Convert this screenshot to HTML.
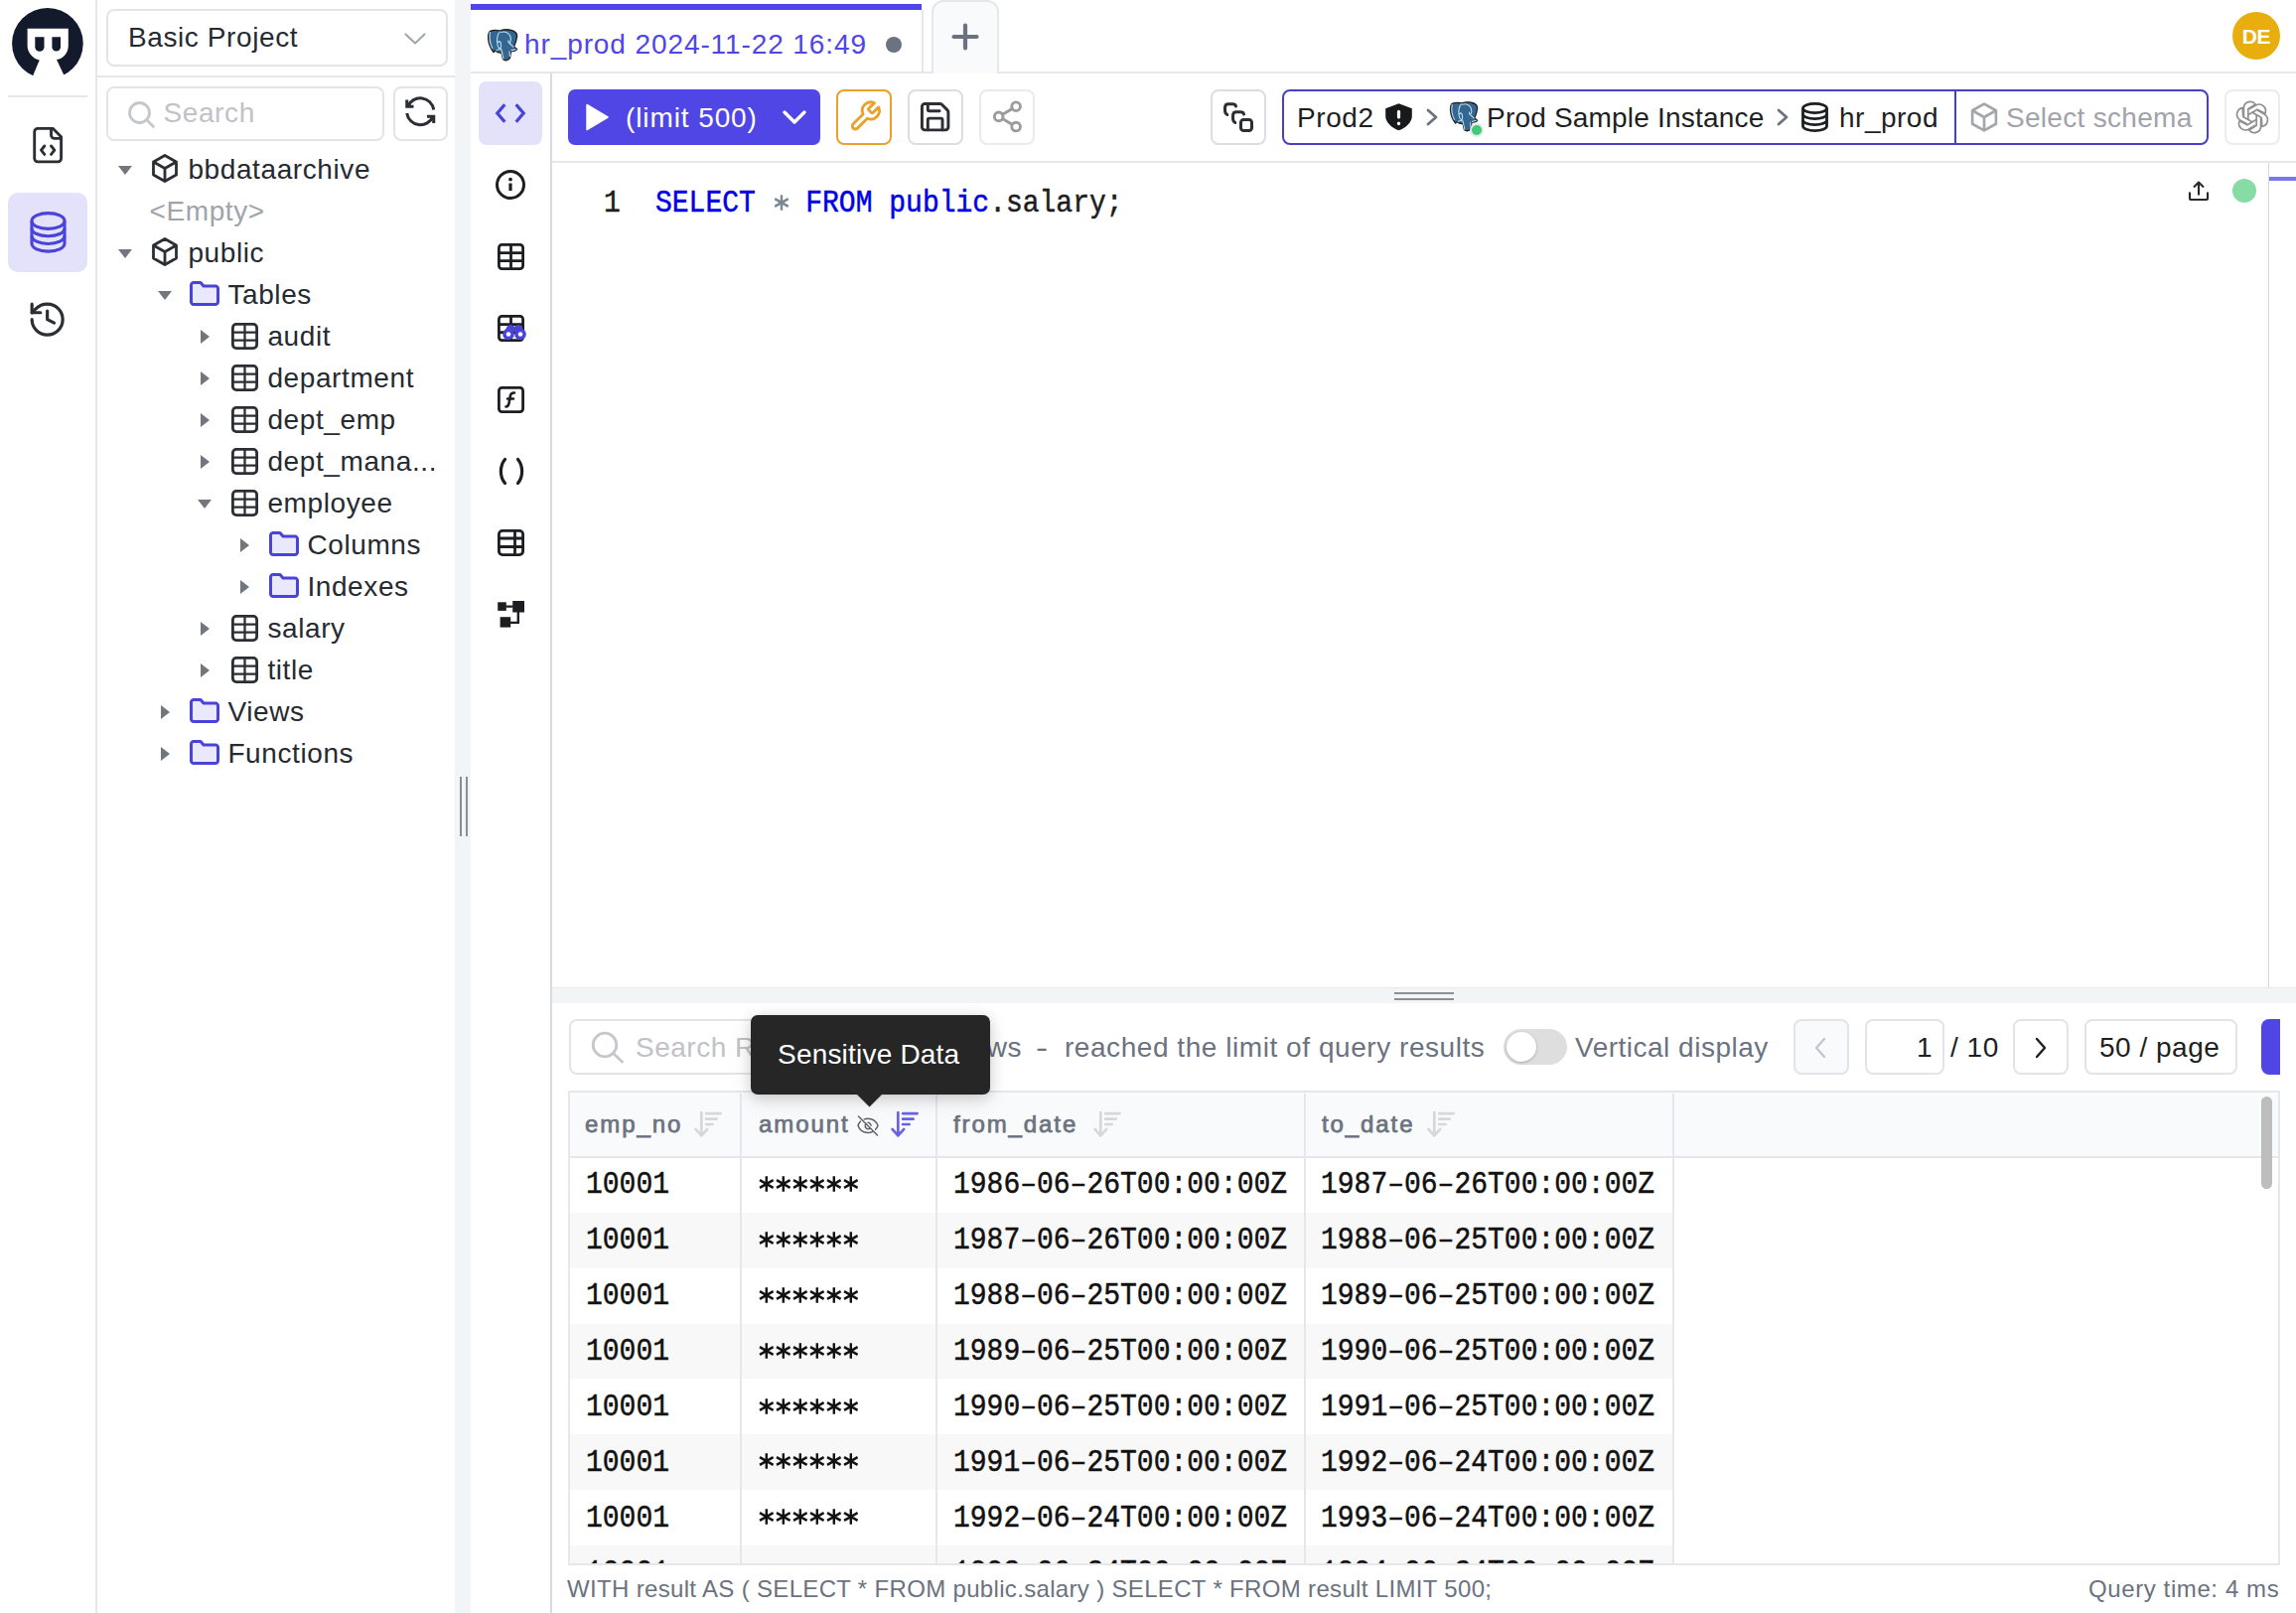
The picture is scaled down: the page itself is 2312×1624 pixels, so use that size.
<!DOCTYPE html>
<html><head><meta charset="utf-8">
<style>
*{box-sizing:border-box;margin:0;padding:0}
html,body{width:2312px;height:1624px;overflow:hidden;background:#fff}
body{position:relative;font-family:"Liberation Sans",sans-serif;color:#262a31}
.a{position:absolute}
.mono{font-family:"Liberation Mono",monospace}
.t.mono{transform:scaleY(1.12);transform-origin:0 23px;letter-spacing:0;-webkit-text-stroke:0.45px currentColor}
svg{position:absolute;overflow:visible}
.t{position:absolute;font-size:28px;line-height:32px;white-space:nowrap;letter-spacing:0.6px}
.row{position:absolute;left:0;width:458px;height:42px}
.hd{position:absolute;top:17px;font-size:24px;line-height:28px;color:#6b7280;-webkit-text-stroke:0.75px #6b7280;letter-spacing:1.9px;white-space:nowrap}
.btn{position:absolute;border:2px solid #e0e0e6;border-radius:8px;background:#fff}
</style></head><body>

<!-- LEFT RAIL -->
<div class="a" style="left:96px;top:0;width:2px;height:1624px;background:#e5e7eb"></div>
<svg style="left:0;top:0" width="100" height="100" viewBox="0 0 100 100">
  <circle cx="47.9" cy="43.8" r="35.8" fill="#131a2b"/>
  <path d="M27.6 28.8H68.8V46C68.8 53 64 59 57 60L67.4 82H30.75L39.7 60.6C33 59 27.6 53 27.6 46Z" fill="#fff"/>
  <path d="M35.3 37.2H44.5V47.2A4.6 4.6 0 0 1 35.3 47.2Z" fill="#131a2b"/>
  <path d="M52.4 37.2H61V47.2A4.3 4.3 0 0 1 52.4 47.2Z" fill="#131a2b"/>
</svg>
<div class="a" style="left:8px;top:96px;width:80px;height:2px;background:#e5e7eb"></div>
<!-- file code icon -->
<svg style="left:27.7px;top:125.8px" width="40.3" height="40.3" viewBox="0 0 24 24" fill="none" stroke="#2b2e33" stroke-width="1.7" stroke-linecap="round" stroke-linejoin="round"><path d="M10 12.5 8 15l2 2.5"/><path d="m14 12.5 2 2.5-2 2.5"/><path d="M14 2v4a2 2 0 0 0 2 2h4"/><path d="M15 2H6a2 2 0 0 0-2 2v16a2 2 0 0 0 2 2h12a2 2 0 0 0 2-2V7z"/></svg>
<div class="a" style="left:8px;top:194px;width:80px;height:80px;background:#e4e2fb;border-radius:10px"></div>
<svg style="left:30px;top:213px" width="37" height="43" viewBox="0 0 37 43" fill="none" stroke="#4a43d9" stroke-width="3.1"><ellipse cx="18.5" cy="9.5" rx="16.5" ry="7.9"/><path d="M2 9.5V32.2A16.5 7.9 0 0 0 35 32.2V9.5"/><path d="M2 16.9A16.5 7.9 0 0 0 35 16.9"/><path d="M2 24.6A16.5 7.9 0 0 0 35 24.6"/></svg>
<svg style="left:27.2px;top:301.2px" width="41.3" height="41.3" viewBox="0 0 24 24" fill="none" stroke="#2b2e33" stroke-width="1.85" stroke-linecap="round" stroke-linejoin="round"><path d="M3 12a9 9 0 1 0 9-9 9.75 9.75 0 0 0-6.74 2.74L3 8"/><path d="M3 3v5h5"/><path d="M12 7v5l4 2"/></svg>

<!-- SIDEBAR -->
<svg width="0" height="0" style="position:absolute">
 <defs>
  <symbol id="arD" viewBox="0 0 14 9"><path d="M0 0H14L7 9Z" fill="#72767d"/></symbol>
  <symbol id="arR" viewBox="0 0 9 14"><path d="M0 0V14L9 7Z" fill="#72767d"/></symbol>
  <symbol id="cube" viewBox="0 0 26 29" overflow="visible"><g fill="none" stroke="#2b2e33" stroke-width="2.8" stroke-linejoin="round"><path d="M13 1.5L24.5 8V21L13 27.5L1.5 21V8Z"/><path d="M1.5 8L13 14.5L24.5 8M13 14.5V27.5"/></g></symbol>
  <symbol id="fold" viewBox="0 0 30 25" overflow="visible"><path d="M1.5 4A2.5 2.5 0 0 1 4 1.5H11L14 5H26A2.5 2.5 0 0 1 28.5 7.5V21A2.5 2.5 0 0 1 26 23.5H4A2.5 2.5 0 0 1 1.5 21Z" fill="#e9e8fc" stroke="#4a43d9" stroke-width="3" stroke-linejoin="round"/></symbol>
  <symbol id="tbl" viewBox="0 0 27 27" overflow="visible"><g fill="none" stroke="#2b2e33" stroke-width="2.8"><rect x="1.4" y="1.4" width="24.2" height="24.2" rx="3.5"/><path d="M13.5 1.4V25.6M1.4 9.6H25.6M1.4 17.6H25.6" stroke-width="2.3"/></g></symbol>
  <symbol id="pgel" viewBox="0 0 32 33" overflow="visible"><path d="M3.5 2.5C8 0.5 11 1.5 13.5 2C17 0.8 21 0.5 24 1.3C29 2.5 31 5 30.5 8C30 12 28.5 16 27.5 18L30.5 20.5C29 22.5 26 22.5 24.5 22.5L23.5 29C22.5 32 18.5 32.5 16.5 30.5L15 24C12 24.5 10 23 9 22L7 23.5C3.5 19 2 14 1.7 10C1.5 6 2 3.5 3.5 2.5Z" fill="#336791" stroke="#222" stroke-width="1.4" stroke-linejoin="round"/><g fill="none" stroke="#bfe0f5" stroke-width="1.1"><path d="M13.5 2.5C10.5 6 10 11 11 16C11.5 19 13 20 14 19.5C15 18 14.5 14 13.5 13C12 12 11.5 13.5 12 14"/><path d="M14 3.5C18.5 2 23 4 24 8C25 11 24 13 23 14.5C25 16 26.5 18 27.5 18.5"/><path d="M14.5 20C15.5 23 16 26 17 30.5M23 22.5L23.5 28"/><path d="M9.5 22C11 20.5 12.5 21 14 20.5M24.5 22C26 21.5 28.5 21 29.5 20.5"/><path d="M3.5 3C2.5 8 3 14 6 20"/><path d="M22 11.5C21.5 12.5 22 14 23 14.5"/></g></symbol>
  <symbol id="tbl2" viewBox="0 0 27 27" overflow="visible"><g fill="none" stroke="#1c1e21" stroke-width="2.8"><rect x="1.4" y="1.4" width="24.2" height="24.2" rx="3"/><path d="M13.5 1.4V25.6M1.4 9.6H25.6M1.4 17.6H25.6"/></g></symbol>
  <symbol id="ast" viewBox="-8 -8 16 16" overflow="visible"><path d="M0 -7.8V7.8M-6.8 -3.9L6.8 3.9M-6.8 3.9L6.8 -3.9" stroke="currentColor" stroke-width="2.4" fill="none"/></symbol>
  <symbol id="ast6" viewBox="0 0 110 18" overflow="visible"><use href="#ast" x="0.8" y="1" width="16" height="16"/><use href="#ast" x="17.8" y="1" width="16" height="16"/><use href="#ast" x="34.8" y="1" width="16" height="16"/><use href="#ast" x="51.8" y="1" width="16" height="16"/><use href="#ast" x="68.8" y="1" width="16" height="16"/><use href="#ast" x="85.8" y="1" width="16" height="16"/></symbol>
  <symbol id="sort" viewBox="0 0 30 30" overflow="visible"><g fill="none" stroke-width="2.7" stroke-linecap="round" stroke-linejoin="round"><path d="M7.3 2.2V25.4M1.5 18.9L7.3 25.4L13.2 18.9M12.1 3.1H26.6M12.1 8.7H22.6M12.1 14H18.6"/></g></symbol>
 </defs>
</svg>
<div class="btn" style="left:107px;top:9px;width:344px;height:58px;border-color:#e3e4e8"></div>
<div class="t" style="left:129px;top:21.5px">Basic Project</div>
<svg style="left:407px;top:33px" width="22" height="12" viewBox="0 0 22 12" fill="none" stroke="#a3a7ae" stroke-width="2.2" stroke-linecap="round" stroke-linejoin="round"><path d="M1.5 1.5L11 10.5L20.5 1.5"/></svg>
<div class="a" style="left:98px;top:76px;width:360px;height:2px;background:#e5e7eb"></div>
<div class="btn" style="left:107px;top:86.5px;width:280px;height:55px;border-color:#e3e4e8"></div>
<svg style="left:129px;top:101.5px" width="27" height="27" viewBox="0 0 27 27" fill="none" stroke="#c4c7cc" stroke-width="2.8" stroke-linecap="round"><circle cx="11.5" cy="11.5" r="10"/><path d="M19 19L25.5 25.5"/></svg>
<div class="t" style="left:164.5px;top:98px;color:#bfc2c7">Search</div>
<div class="btn" style="left:396px;top:86.5px;width:55px;height:55px;border-color:#e3e4e8"></div>
<svg style="left:403.4px;top:92px" width="40.5" height="40.5" viewBox="0 0 24 24" fill="none" stroke="#2b2e33" stroke-width="1.8" stroke-linecap="butt" stroke-linejoin="miter"><path d="M20 11A8.1 8.1 0 0 0 4.5 9M4 5V9H8"/><path d="M4 13A8.1 8.1 0 0 0 19.5 15M20 19V15H16"/></svg>
<div class="row" style="top:150.3px"><svg style="left:119px;top:16.5px" width="14" height="9"><use href="#arD"/></svg><svg style="left:153px;top:5px" width="26" height="29"><use href="#cube"/></svg><div class="t" style="left:189.4px;top:4.3px">bbdataarchive</div></div>
<div class="row" style="top:192.3px"><div class="t" style="left:150.5px;top:4.3px;color:#9fa3aa">&lt;Empty&gt;</div></div>
<div class="row" style="top:234.3px"><svg style="left:119px;top:16.5px" width="14" height="9"><use href="#arD"/></svg><svg style="left:153px;top:5px" width="26" height="29"><use href="#cube"/></svg><div class="t" style="left:189.4px;top:4.3px">public</div></div>
<div class="row" style="top:276.3px"><svg style="left:159px;top:16.5px" width="14" height="9"><use href="#arD"/></svg><svg style="left:191.4px;top:6.5px" width="30" height="25"><use href="#fold"/></svg><div class="t" style="left:229.4px;top:4.3px">Tables</div></div>
<div class="row" style="top:318.3px"><svg style="left:202.3px;top:14px" width="9" height="14"><use href="#arR"/></svg><svg style="left:232.6px;top:6.4px" width="27" height="27"><use href="#tbl"/></svg><div class="t" style="left:269.4px;top:4.3px">audit</div></div>
<div class="row" style="top:360.3px"><svg style="left:202.3px;top:14px" width="9" height="14"><use href="#arR"/></svg><svg style="left:232.6px;top:6.4px" width="27" height="27"><use href="#tbl"/></svg><div class="t" style="left:269.4px;top:4.3px">department</div></div>
<div class="row" style="top:402.3px"><svg style="left:202.3px;top:14px" width="9" height="14"><use href="#arR"/></svg><svg style="left:232.6px;top:6.4px" width="27" height="27"><use href="#tbl"/></svg><div class="t" style="left:269.4px;top:4.3px">dept_emp</div></div>
<div class="row" style="top:444.3px"><svg style="left:202.3px;top:14px" width="9" height="14"><use href="#arR"/></svg><svg style="left:232.6px;top:6.4px" width="27" height="27"><use href="#tbl"/></svg><div class="t" style="left:269.4px;top:4.3px">dept_mana...</div></div>
<div class="row" style="top:486.3px"><svg style="left:199px;top:16.5px" width="14" height="9"><use href="#arD"/></svg><svg style="left:232.6px;top:6.4px" width="27" height="27"><use href="#tbl"/></svg><div class="t" style="left:269.4px;top:4.3px">employee</div></div>
<div class="row" style="top:528.3px"><svg style="left:242.3px;top:14px" width="9" height="14"><use href="#arR"/></svg><svg style="left:271.4px;top:6.5px" width="30" height="25"><use href="#fold"/></svg><div class="t" style="left:309.4px;top:4.3px">Columns</div></div>
<div class="row" style="top:570.3px"><svg style="left:242.3px;top:14px" width="9" height="14"><use href="#arR"/></svg><svg style="left:271.4px;top:6.5px" width="30" height="25"><use href="#fold"/></svg><div class="t" style="left:309.4px;top:4.3px">Indexes</div></div>
<div class="row" style="top:612.3px"><svg style="left:202.3px;top:14px" width="9" height="14"><use href="#arR"/></svg><svg style="left:232.6px;top:6.4px" width="27" height="27"><use href="#tbl"/></svg><div class="t" style="left:269.4px;top:4.3px">salary</div></div>
<div class="row" style="top:654.3px"><svg style="left:202.3px;top:14px" width="9" height="14"><use href="#arR"/></svg><svg style="left:232.6px;top:6.4px" width="27" height="27"><use href="#tbl"/></svg><div class="t" style="left:269.4px;top:4.3px">title</div></div>
<div class="row" style="top:696.3px"><svg style="left:162.3px;top:14px" width="9" height="14"><use href="#arR"/></svg><svg style="left:191.4px;top:6.5px" width="30" height="25"><use href="#fold"/></svg><div class="t" style="left:229.4px;top:4.3px">Views</div></div>
<div class="row" style="top:738.3px"><svg style="left:162.3px;top:14px" width="9" height="14"><use href="#arR"/></svg><svg style="left:191.4px;top:6.5px" width="30" height="25"><use href="#fold"/></svg><div class="t" style="left:229.4px;top:4.3px">Functions</div></div>

<!-- GUTTER -->
<div class="a" style="left:458px;top:0;width:16px;height:1624px;background:#f3f4f6"></div>
<div class="a" style="left:463px;top:782px;width:2px;height:60px;background:#8a8d92"></div>
<div class="a" style="left:469px;top:782px;width:2px;height:60px;background:#8a8d92"></div>

<!-- TAB BAR -->
<div class="a" style="left:474px;top:72px;width:1838px;height:2px;background:#e5e7eb"></div>
<div class="a" style="left:474px;top:4px;width:454px;height:6px;background:#4f46e5"></div>
<div class="a" style="left:928px;top:10px;width:2px;height:62px;background:#e5e7eb"></div>
<svg id="pg1" style="left:490px;top:28.5px" width="32" height="33" viewBox="0 0 32 33"><use href="#pgel"/></svg>
<div class="t" style="left:528px;top:29px;color:#4f46e5;letter-spacing:0.9px">hr_prod 2024-11-22 16:49</div>
<div class="a" style="left:892px;top:37px;width:16px;height:16px;border-radius:50%;background:#6b7280"></div>
<div class="a" style="left:938px;top:0;width:68px;height:74px;border:2px solid #e5e7eb;border-bottom:none;border-radius:12px 12px 0 0;background:#f9fafb"></div>
<svg style="left:956px;top:21px" width="32" height="32" viewBox="0 0 32 32" stroke="#6b7280" stroke-width="4.2" stroke-linecap="round"><path d="M16 4.5V27.5M4.5 16H27.5"/></svg>
<div class="a" style="left:2248px;top:12px;width:48px;height:48px;border-radius:50%;background:#e8ae0d;color:#fff;font-size:21px;font-weight:bold;line-height:50px;text-align:center;letter-spacing:-0.3px">DE</div>

<!-- EDITOR SIDE ICON BAR -->
<div class="a" style="left:554px;top:74px;width:2px;height:1550px;background:#d9dbe0"></div>
<div class="a" style="left:482px;top:82px;width:64px;height:64px;border-radius:8px;background:#e4e2fb"></div>
<svg style="left:499px;top:104px" width="30" height="20" viewBox="0 0 30 20" fill="none" stroke="#4a43d9" stroke-width="3.3"><path d="M9.3 1.2L1.8 10L9.3 18.8M20.7 1.2L28.2 10L20.7 18.8"/></svg>
<svg style="left:499px;top:171px" width="30" height="30" viewBox="0 0 30 30" fill="none" stroke="#1c1e21" stroke-width="3"><circle cx="15" cy="15" r="13.5"/><path d="M15 13.5V21" stroke-width="3.2"/><circle cx="15" cy="9.6" r="1.9" fill="#1c1e21" stroke="none"/></svg>
<svg style="left:500.5px;top:244.5px" width="27" height="27"><use href="#tbl2"/></svg>
<svg style="left:500.5px;top:316.5px" width="27" height="27"><use href="#tbl2"/></svg>
<svg style="left:505px;top:324px" width="26" height="20" viewBox="0 0 26 20"><path d="M4 9C5 4 7 3 9.5 3C11 3 12 4 13 5C14 4 15 3 16.5 3C19 3 21 4 22 9" fill="#4a43d9"/><circle cx="7" cy="12.5" r="5.8" fill="#4a43d9"/><circle cx="19" cy="12.5" r="5.8" fill="#4a43d9"/><circle cx="7" cy="12.5" r="2.3" fill="#fff"/><circle cx="19" cy="12.5" r="2.3" fill="#fff"/></svg>
<svg style="left:500.5px;top:388.5px" width="27" height="27" viewBox="0 0 27 27" fill="none" stroke="#1c1e21" stroke-width="2.8"><rect x="1.4" y="1.4" width="24.2" height="24.2" rx="3"/><path d="M8.5 20.5C10.5 20.5 11 19.5 11.5 17L13 9C13.5 7 14.5 6.3 17 6.5" stroke-width="2.6" stroke-linecap="round"/><path d="M10 12.5H16" stroke-width="2.4" stroke-linecap="round"/></svg>
<svg style="left:501.5px;top:460.5px" width="26" height="27" viewBox="0 0 26 27" fill="none" stroke="#1c1e21" stroke-width="3.2" stroke-linecap="round"><path d="M6.5 1.5C1 8 1 19 6.5 25.5"/><path d="M19.5 1.5C25 8 25 19 19.5 25.5"/></svg>
<svg style="left:500.5px;top:532.5px" width="27" height="27" viewBox="0 0 27 27" fill="none" stroke="#1c1e21" stroke-width="2.8"><rect x="1.4" y="1.4" width="24.2" height="24.2" rx="3.5"/><path d="M17.5 1.4V25.6M1.4 9H25.6M1.4 17.5H25.6"/></svg>
<svg style="left:500px;top:604px" width="30" height="30" viewBox="0 0 30 30"><g fill="#1c1e21"><rect x="1.2" y="2.3" width="8.6" height="8.6"/><rect x="16.2" y="1" width="11.8" height="11.5"/><rect x="3.6" y="17.2" width="10.6" height="10.4"/></g><path d="M9.5 6.6H16.5M21.8 12V22.9H14" fill="none" stroke="#1c1e21" stroke-width="2.4"/></svg>


<!-- TOOLBAR -->
<div class="a" style="left:556px;top:162px;width:1756px;height:2px;background:#e5e7eb"></div>
<div class="a" style="left:572px;top:90px;width:254px;height:56px;border-radius:7px;background:#4f46e5"></div>
<svg style="left:590px;top:104px" width="23" height="28" viewBox="0 0 23 28"><path d="M1 1.5L22 14L1 26.5Z" fill="#fff" stroke="#fff" stroke-width="1.5" stroke-linejoin="round"/></svg>
<div class="t" style="left:630px;top:103px;color:#fff;letter-spacing:0.9px">(limit 500)</div>
<svg style="left:788px;top:111px" width="24" height="15" viewBox="0 0 24 15" fill="none" stroke="#fff" stroke-width="3.4" stroke-linecap="round" stroke-linejoin="round"><path d="M2 2L12 12L22 2"/></svg>
<div class="btn" style="left:842px;top:90px;width:56px;height:56px;border-color:#eaa02a"></div>
<svg style="left:853.6px;top:100.3px" width="34.3" height="34.3" viewBox="0 0 24 24" fill="none" stroke="#eaa02a" stroke-width="2" stroke-linecap="round" stroke-linejoin="round"><path d="M14.7 6.3a1 1 0 0 0 0 1.4l1.6 1.6a1 1 0 0 0 1.4 0l3.77-3.77a6 6 0 0 1-7.94 7.94l-6.91 6.91a2.12 2.12 0 0 1-3-3l6.91-6.91a6 6 0 0 1 7.94-7.94l-3.76 3.76z"/></svg>
<div class="btn" style="left:914px;top:90px;width:56px;height:56px;border-color:#dcdde2"></div>
<svg style="left:924.4px;top:100.1px" width="35.3" height="35.3" viewBox="0 0 24 24" fill="none" stroke="#2b2e33" stroke-width="2" stroke-linecap="round" stroke-linejoin="round"><path d="M15.2 3a2 2 0 0 1 1.4.6l3.8 3.8a2 2 0 0 1 .6 1.4V19a2 2 0 0 1-2 2H5a2 2 0 0 1-2-2V5a2 2 0 0 1 2-2z"/><path d="M17 21v-7a1 1 0 0 0-1-1H8a1 1 0 0 0-1 1v7"/><path d="M7 3v4a1 1 0 0 0 1 1h7"/></svg>
<div class="btn" style="left:986px;top:90px;width:56px;height:56px;border-color:#e9eaed"></div>
<svg style="left:996.9px;top:100.3px" width="34.8" height="34.8" viewBox="0 0 24 24" fill="none" stroke="#9c9c9c" stroke-width="2" stroke-linecap="round" stroke-linejoin="round"><circle cx="18" cy="5" r="3"/><circle cx="6" cy="12" r="3"/><circle cx="18" cy="19" r="3"/><path d="M8.59 13.51l6.83 3.98M15.41 6.51l-6.82 3.98"/></svg>

<div class="btn" style="left:1219px;top:90px;width:56px;height:56px;border-color:#dcdde2"></div>
<svg style="left:1232px;top:103px" width="30" height="30" viewBox="0 0 30 30" fill="none" stroke="#2b2e33" stroke-width="3" stroke-linecap="round"><path d="M3.8 12.5C2 11.5 1.5 10 1.5 8V5.5C1.5 3.3 2.8 1.8 5 1.8H9C11 1.8 12.2 2.5 12.5 4"/><path d="M11.8 20.5C10 19.5 9.5 18 9.5 16V13.5C9.5 11.3 10.8 9.8 13 9.8H17C19 9.8 20.2 10.5 20.5 12"/><rect x="17.5" y="17.5" width="11" height="11" rx="2.8"/></svg>

<div class="a" style="left:1291px;top:90px;width:933px;height:56px;border:2px solid #4640c4;border-radius:8px"></div>
<div class="a" style="left:1968px;top:90px;width:2px;height:56px;background:#4640c4"></div>
<div class="t" style="left:1306px;top:103px;color:#1d1f23">Prod2</div>
<svg style="left:1395px;top:104px" width="27" height="28" viewBox="0 0 27 28"><path d="M13.5 0.3L26.8 5.2V13C26.8 19 21 24.5 13.5 27.3C6 24.5 0.2 19 0.2 13V5.2Z" fill="#18191b"/><rect x="11.9" y="6.8" width="3.2" height="8.8" rx="1.6" fill="#fff"/><rect x="11.9" y="18.5" width="3.2" height="3.7" rx="1.6" fill="#fff"/></svg>
<svg style="left:1436px;top:109px" width="12" height="18" viewBox="0 0 12 18" fill="none" stroke="#6b7280" stroke-width="2.8" stroke-linecap="round" stroke-linejoin="round"><path d="M2 2L10 9L2 16"/></svg>
<svg style="left:1458.5px;top:101.5px" width="30" height="31" viewBox="0 0 32 33"><use href="#pgel"/></svg>
<div class="a" style="left:1480px;top:124px;width:14px;height:14px;border-radius:50%;background:#e5e7eb"></div>
<div class="a" style="left:1482px;top:126px;width:10px;height:10px;border-radius:50%;background:#3fca73"></div>
<div class="t" style="left:1497px;top:103px;color:#1d1f23;letter-spacing:0.2px">Prod Sample Instance</div>
<svg style="left:1789px;top:109px" width="12" height="18" viewBox="0 0 12 18" fill="none" stroke="#6b7280" stroke-width="2.8" stroke-linecap="round" stroke-linejoin="round"><path d="M2 2L10 9L2 16"/></svg>
<svg style="left:1814px;top:102.5px" width="27" height="30" viewBox="0 0 27 30" fill="none" stroke="#1d1f23" stroke-width="2.8"><ellipse cx="13.5" cy="6" rx="12" ry="4.6"/><path d="M1.5 6V24C1.5 26.5 6.9 28.6 13.5 28.6S25.5 26.5 25.5 24V6"/><path d="M1.5 12C1.5 14.5 6.9 16.6 13.5 16.6S25.5 14.5 25.5 12"/><path d="M1.5 18C1.5 20.5 6.9 22.6 13.5 22.6S25.5 20.5 25.5 18"/></svg>
<div class="t" style="left:1852px;top:103px;color:#1d1f23;letter-spacing:0.5px">hr_prod</div>
<svg style="left:1984px;top:102.5px" width="28" height="30" viewBox="0 0 26 29" fill="none" stroke="#a3a6ad" stroke-width="2.6" stroke-linejoin="round"><path d="M13 1.5L24.5 8V21L13 27.5L1.5 21V8Z"/><path d="M1.5 8L13 14.5L24.5 8M13 14.5V27.5"/></svg>
<div class="t" style="left:2020px;top:103px;color:#a0a3aa;letter-spacing:0.3px">Select schema</div>
<div class="btn" style="left:2240px;top:90px;width:56px;height:56px;border-color:#ececec"></div>
<svg style="left:2252px;top:101.5px" width="32" height="32" viewBox="-16 -16 32 32" fill="none" stroke="#8f8f8f" stroke-width="1.7" stroke-linejoin="round">
 <g id="oai"><path d="M-8.6 -1V-9.6A6.6 6.6 0 0 1 3.2 -13.1L-4.2 -8.3V2.2"/></g>
 <use href="#oai" transform="rotate(60)"/><use href="#oai" transform="rotate(120)"/><use href="#oai" transform="rotate(180)"/><use href="#oai" transform="rotate(240)"/><use href="#oai" transform="rotate(300)"/>
</svg>


<!-- EDITOR -->
<div class="t mono" style="left:608px;top:189.7px;color:#1d1d1d;letter-spacing:0">1</div>
<div class="t mono" style="left:660px;top:189.7px;color:#1d1d1d;letter-spacing:0"><span style="color:#0000e6">SELECT</span> <span style="color:#778899">&nbsp;</span> <span style="color:#0000e6">FROM</span> <span style="color:#0000e6">public</span>.salary;</div>
<svg style="left:778.7px;top:196.1px;color:#7a8793" width="16" height="16" viewBox="0 0 16 16"><use href="#ast" x="0" y="0" width="16" height="16" style="stroke-width:2"/></svg>
<svg style="left:2203px;top:181px" width="22" height="22" viewBox="0 0 22 22" fill="none" stroke="#26282c" stroke-width="2.1" stroke-linejoin="round"><path d="M2 12.5V19A1 1 0 0 0 3 20H19A1 1 0 0 0 20 19V12.5"/><path d="M11 15.5V2.5M6 7.5L11 2.5L16 7.5"/></svg>
<div class="a" style="left:2248px;top:180px;width:24px;height:24px;border-radius:50%;background:#87dba4"></div>
<div class="a" style="left:2284px;top:164px;width:1px;height:830px;background:#d4d6da"></div>
<div class="a" style="left:2285px;top:178px;width:27px;height:4px;background:#7c77e9"></div>

<!-- SPLITTER -->
<div class="a" style="left:556px;top:994px;width:1756px;height:16px;background:#f3f4f6;border-top:1px solid #e9e9eb"></div>
<div class="a" style="left:1404px;top:999px;width:60px;height:2px;background:#8b8f95"></div>
<div class="a" style="left:1404px;top:1005px;width:60px;height:2px;background:#8b8f95"></div>

<!-- RESULTS -->
<div class="btn" style="left:573px;top:1026px;width:300px;height:56px;border-color:#e3e4e8"></div>
<svg style="left:595px;top:1037.5px" width="34" height="33" viewBox="0 0 34 33" fill="none" stroke="#c4c7cc" stroke-width="2.8" stroke-linecap="round"><circle cx="14" cy="14" r="11.8"/><path d="M22.8 22.8L31.5 31"/></svg>
<div class="t" style="left:640px;top:1039px;color:#bfc2c7;letter-spacing:0.5px">Search Result</div>
<div class="t" style="right:1283px;top:1039px;color:#6b7280;letter-spacing:0.5px">500 rows</div><div class="t" style="left:1043px;top:1039px;color:#6b7280;transform:scaleX(1.3);transform-origin:0 0">-</div><div class="t" style="left:1072px;top:1039px;color:#6b7280;letter-spacing:0.55px">reached the limit of query results</div>
<div class="a" style="left:1514px;top:1036px;width:64px;height:36px;border-radius:18px;background:#dedede"></div>
<div class="a" style="left:1517px;top:1039px;width:30px;height:30px;border-radius:50%;background:#fff;box-shadow:0 1px 3px rgba(0,0,0,0.25)"></div>
<div class="t" style="left:1586px;top:1039px;color:#6b7280;letter-spacing:0.5px">Vertical display</div>
<div class="btn" style="left:1806px;top:1026px;width:56px;height:56px;border-color:#e3e4e8;background:#f9fafb"></div>
<svg style="left:1826px;top:1044px" width="14" height="22" viewBox="0 0 14 22" fill="none" stroke="#c4c7cc" stroke-width="2.4" stroke-linecap="round" stroke-linejoin="round"><path d="M11 2L3 11L11 20"/></svg>
<div class="btn" style="left:1878px;top:1026px;width:80px;height:56px;border-color:#e3e4e8"></div>
<div class="t" style="left:1930px;top:1039px;color:#1d1f23">1</div>
<div class="t" style="left:1964px;top:1039px;color:#1d1f23;letter-spacing:0.5px">/ 10</div>
<div class="btn" style="left:2027px;top:1026px;width:56px;height:56px;border-color:#e3e4e8"></div>
<svg style="left:2048px;top:1044px" width="14" height="22" viewBox="0 0 14 22" fill="none" stroke="#1d1f23" stroke-width="2.4" stroke-linecap="round" stroke-linejoin="round"><path d="M3 2L11 11L3 20"/></svg>
<div class="btn" style="left:2099px;top:1026px;width:154px;height:56px;border-color:#e3e4e8"></div>
<div class="t" style="left:2114px;top:1039px;color:#1d1f23;letter-spacing:0.5px">50 / page</div>
<div class="a" style="left:2277px;top:1026px;width:40px;height:56px;border-radius:8px;background:#4f46e5"></div>
<div class="a" style="left:2296px;top:1020px;width:16px;height:604px;background:#fff"></div>
<div class="a" style="left:572px;top:1098px;width:1724px;height:478px;border:2px solid #e5e7eb;overflow:hidden"><div class="a" style="left:1px;top:1px">
<div class="a" style="left:-1px;top:-1px;width:1721px;height:66px;background:#f9fafb;border-bottom:2px solid #e5e7eb"></div>
<div class="a" style="left:0;top:119.85px;width:1110px;height:55.85px;background:#f8f8f9;margin-left:-1px"></div>
<div class="a" style="left:0;top:231.55px;width:1110px;height:55.85px;background:#f8f8f9;margin-left:-1px"></div>
<div class="a" style="left:0;top:343.25px;width:1110px;height:55.85px;background:#f8f8f9;margin-left:-1px"></div>
<div class="a" style="left:0;top:454.95px;width:1110px;height:55.85px;background:#f8f8f9;margin-left:-1px"></div>
<div class="a" style="left:170px;top:0;width:2px;height:477px;background:#e5e7eb"></div>
<div class="a" style="left:367px;top:0;width:2px;height:477px;background:#e5e7eb"></div>
<div class="a" style="left:738px;top:0;width:2px;height:477px;background:#e5e7eb"></div>
<div class="a" style="left:1109px;top:0;width:2px;height:477px;background:#e5e7eb"></div>
<div class="hd" style="left:14px">emp_no</div>
<div class="hd" style="left:189px">amount</div>
<div class="hd" style="left:385px">from_date</div>
<div class="hd" style="left:756px">to_date</div>
<div class="t mono" style="left:15px;top:77.4px;color:#111">10001</div>
<svg style="left:188px;top:82.1px;color:#111" width="110" height="18"><use href="#ast6"/></svg>
<div class="t mono" style="left:385px;top:77.4px;color:#111">1986&#8211;06&#8211;26T00:00:00Z</div>
<div class="t mono" style="left:755px;top:77.4px;color:#111">1987&#8211;06&#8211;26T00:00:00Z</div>
<div class="t mono" style="left:15px;top:133.2px;color:#111">10001</div>
<svg style="left:188px;top:137.9px;color:#111" width="110" height="18"><use href="#ast6"/></svg>
<div class="t mono" style="left:385px;top:133.2px;color:#111">1987&#8211;06&#8211;26T00:00:00Z</div>
<div class="t mono" style="left:755px;top:133.2px;color:#111">1988&#8211;06&#8211;25T00:00:00Z</div>
<div class="t mono" style="left:15px;top:189.1px;color:#111">10001</div>
<svg style="left:188px;top:193.8px;color:#111" width="110" height="18"><use href="#ast6"/></svg>
<div class="t mono" style="left:385px;top:189.1px;color:#111">1988&#8211;06&#8211;25T00:00:00Z</div>
<div class="t mono" style="left:755px;top:189.1px;color:#111">1989&#8211;06&#8211;25T00:00:00Z</div>
<div class="t mono" style="left:15px;top:245.0px;color:#111">10001</div>
<svg style="left:188px;top:249.7px;color:#111" width="110" height="18"><use href="#ast6"/></svg>
<div class="t mono" style="left:385px;top:245.0px;color:#111">1989&#8211;06&#8211;25T00:00:00Z</div>
<div class="t mono" style="left:755px;top:245.0px;color:#111">1990&#8211;06&#8211;25T00:00:00Z</div>
<div class="t mono" style="left:15px;top:300.8px;color:#111">10001</div>
<svg style="left:188px;top:305.5px;color:#111" width="110" height="18"><use href="#ast6"/></svg>
<div class="t mono" style="left:385px;top:300.8px;color:#111">1990&#8211;06&#8211;25T00:00:00Z</div>
<div class="t mono" style="left:755px;top:300.8px;color:#111">1991&#8211;06&#8211;25T00:00:00Z</div>
<div class="t mono" style="left:15px;top:356.7px;color:#111">10001</div>
<svg style="left:188px;top:361.4px;color:#111" width="110" height="18"><use href="#ast6"/></svg>
<div class="t mono" style="left:385px;top:356.7px;color:#111">1991&#8211;06&#8211;25T00:00:00Z</div>
<div class="t mono" style="left:755px;top:356.7px;color:#111">1992&#8211;06&#8211;24T00:00:00Z</div>
<div class="t mono" style="left:15px;top:412.5px;color:#111">10001</div>
<svg style="left:188px;top:417.2px;color:#111" width="110" height="18"><use href="#ast6"/></svg>
<div class="t mono" style="left:385px;top:412.5px;color:#111">1992&#8211;06&#8211;24T00:00:00Z</div>
<div class="t mono" style="left:755px;top:412.5px;color:#111">1993&#8211;06&#8211;24T00:00:00Z</div>
<div class="t mono" style="left:15px;top:468.4px;color:#111">10001</div>
<svg style="left:188px;top:473.1px;color:#111" width="110" height="18"><use href="#ast6"/></svg>
<div class="t mono" style="left:385px;top:468.4px;color:#111">1993&#8211;06&#8211;24T00:00:00Z</div>
<div class="t mono" style="left:755px;top:468.4px;color:#111">1994&#8211;06&#8211;24T00:00:00Z</div>
<svg style="left:124px;top:17px;stroke:#d4d7dc" width="30" height="30"><use href="#sort"/></svg>
<svg style="left:321.6px;top:17px;stroke:#6a62e6" width="30" height="30"><use href="#sort"/></svg>
<svg style="left:526px;top:17px;stroke:#d4d7dc" width="30" height="30"><use href="#sort"/></svg>
<svg style="left:861.8px;top:17px;stroke:#d4d7dc" width="30" height="30"><use href="#sort"/></svg>
<svg style="left:288px;top:22px" width="22" height="21" viewBox="0 0 22 21" fill="none" stroke="#5a606b" stroke-width="1.45" stroke-linecap="round"><path d="M3.5 6C2.2 7.3 1.3 8.7 1 10.3C2.5 14.5 6.3 17.5 11 17.5C12.6 17.5 14 17.2 15.3 16.6M7.3 3.9C8.5 3.4 9.7 3.2 11 3.2C15.7 3.2 19.5 6.2 21 10.3C20.5 11.8 19.6 13.2 18.5 14.3"/><path d="M9 8.5A3 3 0 0 0 13.3 12.7M14 10.3A3 3 0 0 0 11 7.3"/><path d="M1.5 1L20.5 20"/></svg>
<div class="a" style="left:1702px;top:3px;width:11px;height:93px;border-radius:6px;background:#bdbdbd"></div>
</div></div>
<div class="t" style="left:571px;top:1584px;font-size:24px;color:#6b7280;letter-spacing:0.33px">WITH result AS ( SELECT * FROM public.salary ) SELECT * FROM result LIMIT 500;</div>
<div class="t" style="left:2103px;top:1584px;font-size:24px;color:#6b7280;letter-spacing:0.6px">Query time: 4 ms</div>

<div class="a" style="left:756px;top:1022px;width:241px;height:80px;border-radius:7px;background:#262626;box-shadow:0 3px 14px rgba(0,0,0,0.16),0 6px 24px rgba(0,0,0,0.08)"></div>
<svg style="left:862px;top:1101px" width="27" height="14" viewBox="0 0 27 14"><path d="M0 0H27L13.5 13.5Z" fill="#262626"/></svg>
<div class="t" style="left:783px;top:1046px;color:#fff;letter-spacing:0.2px">Sensitive Data</div>
</body></html>
